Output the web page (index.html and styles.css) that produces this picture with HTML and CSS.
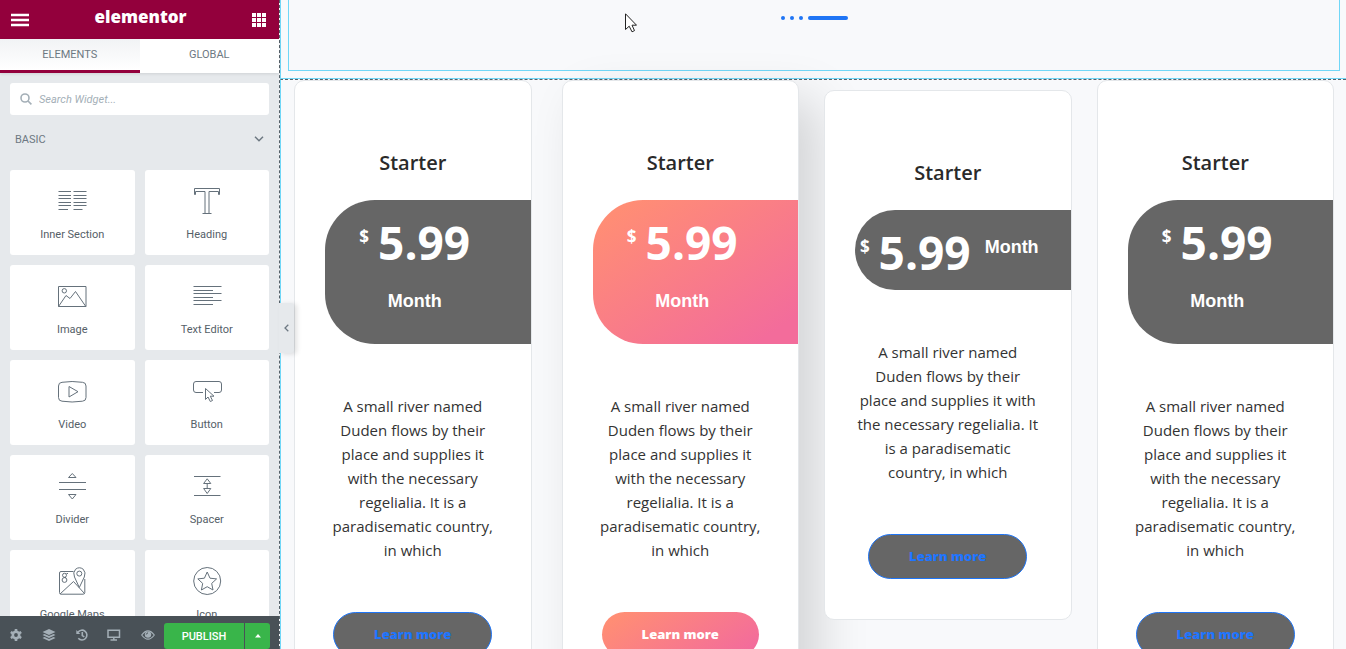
FILE: index.html
```html
<!DOCTYPE html>
<html lang="en">
<head>
<meta charset="utf-8">
<title>Elementor</title>
<link rel="stylesheet" href="styles.css">
</head>
<body>
<div class="editor">
  <aside class="panel">
    <header class="panel-header">
      <button class="header-button" aria-label="Menu"><svg width="18" height="14" viewBox="0 0 18 14"><path d="M0 2h18M0 7h18M0 12h18" stroke="#fff" stroke-width="2.5"/></svg></button>
      <span class="logo">elementor</span>
      <button class="header-button" aria-label="Widgets"><svg width="14" height="14" viewBox="0 0 14 14" fill="#fff"><path d="M0 0h4v4H0zM5 0h4v4H5zM10 0h4v4h-4zM0 5h4v4H0zM5 5h4v4H5zM10 5h4v4h-4zM0 10h4v4H0zM5 10h4v4H5zM10 10h4v4h-4z"/></svg></button>
    </header>
    <nav class="tabs">
      <button class="tab tab-active">ELEMENTS</button>
      <button class="tab">GLOBAL</button>
    </nav>
    <div class="panel-body">
      <label class="search">
        <svg width="12" height="12" viewBox="0 0 12 12" fill="none" stroke="#a4afb7" stroke-width="1.6"><circle cx="5" cy="5" r="4"/><path d="M8 8l3.4 3.4"/></svg>
        <input type="text" placeholder="Search Widget..." aria-label="Search Widget">
      </label>
      <button class="category">BASIC <svg width="10" height="6" viewBox="0 0 10 6" fill="none" stroke="#6d7882" stroke-width="1.5"><path d="M1 .8l4 4 4-4"/></svg></button>
      <div class="widgets">
        <button class="widget"><svg class="icon" viewBox="0 0 30 30"><path d="M1.5 5.5H14M1.5 9.5H14M1.5 12.5H14M1.5 16.5H14M1.5 19.5H14M1.5 23.5H11M16.500 5.500H29.500M16.500 9.500H29.500M16.500 12.500H29.500M16.500 16.500H29.500M16.500 19.500H29.500M16.500 23.500H25.500"/></svg>Inner Section</button>
        <button class="widget"><svg class="icon" viewBox="0 0 30 30"><path d="M2.500 8.500V2.500H27.500V8.500H26.500V5.500H17V27.500M3.500 5.500H13V27.500M3.500 5.500V8.500H2.500M10.500 27.500H19.500"/></svg>Heading</button>
        <button class="widget"><svg class="icon" viewBox="0 0 30 30"><path d="M1.500 5.500H29V25.500H1.500ZM1.500 25.500L9 14.500L13 17.500L18.500 10.500L28.800 25.500"/><circle cx="7.300" cy="9.800" r="2.200"/></svg>Image</button>
        <button class="widget"><svg class="icon" viewBox="0 0 30 30"><path d="M1.500 5.500H29.500M1.500 9.500H21M1.500 12.500H29.500M1.500 16.500H21M1.500 19.500H29.500M1.500 23.500H21"/></svg>Text Editor</button>
        <button class="widget"><svg class="icon" viewBox="0 0 30 30"><path d="M5 6.300Q15 4.700 25.500 6.300Q29 6.500 29 10V21.500Q29 25 25.500 25.200Q15 26.800 5 25.200Q1.500 25 1.500 21.500V10Q1.500 6.500 5 6.300ZM12 10.500V21L21 15.700Z"/></svg>Video</button>
        <button class="widget"><svg class="icon" viewBox="0 0 30 30"><path d="M11 16.500H4Q1.500 16.500 1.500 14V8Q1.500 5.500 4 5.500H27Q29.500 5.500 29.500 8V14Q29.500 16.500 27 16.500H22M13.500 12.500V23.500L16 21L18.300 25.500L20.500 24.500L18.300 20.200H22Z"/></svg>Button</button>
        <button class="widget"><svg class="icon" viewBox="0 0 30 30"><path d="M2 11.500H29M2 18.500H29M15.300 2.500L19 6.500H11.500ZM15.300 28L19 23.500H11.500Z"/></svg>Divider</button>
        <button class="widget"><svg class="icon" viewBox="0 0 30 30"><path d="M2 5.500H28.500M2 24.500H28.500M15.200 7.800L18.800 12.500H11.600ZM15.200 22.500L18.800 17.500H11.600ZM15.200 12.500V17.500"/></svg>Spacer</button>
        <button class="widget"><svg class="icon" viewBox="0 0 30 30"><path d="M16.500 5.500H4Q2.500 5.500 2.500 7V26.500Q2.500 28.200 4 28.200H26Q27.800 28.200 27.800 26.500V13M3 28L16.500 15.500L27.500 27.500M22.300 21.500L17.500 11Q15.500 6.500 18.500 3.300Q22.300 .2 26.300 3.300Q29.200 6.500 27.300 11Z"/><circle cx="22.300" cy="7.600" r="2.500"/><circle cx="7.500" cy="9.300" r="2"/><circle cx="7.500" cy="14" r="2.400"/><path d="M9.500 7.500h1.500M7 11.500h2"/></svg>Google Maps</button>
        <button class="widget"><svg class="icon" viewBox="0 0 30 30"><circle cx="15.200" cy="15" r="13.500"/><path d="M15.200 6L18 12.200L24.600 12.900L19.700 17.400L21 24L15.200 20.700L9.400 24L10.700 17.400L5.800 12.900L12.400 12.200Z"/></svg>Icon</button>
      </div>
    </div>
    <footer class="panel-footer">
      <div class="tools">
        <button class="tool" aria-label="Settings"><svg width="12" height="12" viewBox="0 0 12 12"><circle cx="6" cy="6" r="3.200" fill="none" stroke="#a4afb7" stroke-width="2.600"/><path d="M6 0v2.500M6 9.500V12M.8 3l2.200 1.300M9 7.700L11.200 9M.8 9L3 7.700M9 4.300L11.200 3" stroke="#a4afb7" stroke-width="2.600"/></svg></button>
        <button class="tool" aria-label="Navigator"><svg width="14" height="12" viewBox="0 0 14 12" fill="#a4afb7"><path d="M7 0L13.500 3L7 6L.5 3ZM.5 5.900L2.500 5L7 7L11.500 5L13.500 5.900L7 9ZM.5 8.900L2.500 8L7 10L11.500 8L13.500 8.900L7 12Z"/></svg></button>
        <button class="tool" aria-label="History"><svg width="12" height="12" viewBox="0 0 12 12" fill="none" stroke="#a4afb7" stroke-width="1.600"><path d="M2 3.200A4.900 4.900 0 1 1 2.300 9.300M6.300 3V6.500L8.300 7.800"/><path d="M.3 1v4h4z" fill="#a4afb7" stroke="none"/></svg></button>
        <button class="tool" aria-label="Responsive mode"><svg width="14" height="12" viewBox="0 0 14 12" fill="none" stroke="#a4afb7" stroke-width="1.500"><path d="M1 1.200H12.500V8.300H1ZM1 8.300H12.500M3.500 11H10M6.800 8V11"/></svg></button>
        <button class="tool" aria-label="Preview"><svg width="14" height="10" viewBox="0 0 14 10"><path d="M.7 5Q7-3.400 13.300 5Q7 13.400 .7 5Z" fill="none" stroke="#a4afb7" stroke-width="1.200"/><circle cx="7" cy="4.600" r="3.200" fill="#a4afb7"/><path d="M5.300 4.500Q5.500 3 7 2.900" fill="none" stroke="#495157"/></svg></button>
      </div>
      <button class="publish">PUBLISH</button>
      <button class="publish-more" aria-label="Save options"><svg width="6" height="4" viewBox="0 0 6 4"><path d="M0 3.500L3 0L6 3.500Z" fill="#fff"/></svg></button>
    </footer>
    <button class="panel-toggle" aria-label="Hide panel"><svg width="5" height="8" viewBox="0 0 5 8" fill="none" stroke="#6d7882" stroke-width="1.300"><path d="M4.300 .8L1 4L4.300 7.200"/></svg></button>
  </aside>

  <main class="canvas">
    <section class="slider-section">
      <div class="slider-column">
        <span class="dot"></span><span class="dot"></span><span class="dot"></span><span class="bar"></span>
      </div>
    </section>
    <section class="pricing">
      <article class="card">
        <h2 class="card-title">Starter</h2>
        <div class="price"><span class="currency">$</span><span class="amount">5.99</span><span class="period">Month</span></div>
        <p class="description">A small river named Duden flows by their place and supplies it with the necessary regelialia. It is a paradisematic country, in which</p>
        <a class="learn" href="#">Learn more</a>
      </article>
      <article class="card card-featured">
        <h2 class="card-title">Starter</h2>
        <div class="price"><span class="currency">$</span><span class="amount">5.99</span><span class="period">Month</span></div>
        <p class="description">A small river named Duden flows by their place and supplies it with the necessary regelialia. It is a paradisematic country, in which</p>
        <a class="learn" href="#">Learn more</a>
      </article>
      <article class="card card-wide">
        <h2 class="card-title">Starter</h2>
        <div class="price"><span class="currency">$</span><span class="amount">5.99</span><span class="period">Month</span></div>
        <p class="description">A small river named Duden flows by their place and supplies it with the necessary regelialia. It is a paradisematic country, in which</p>
        <a class="learn" href="#">Learn more</a>
      </article>
      <article class="card">
        <h2 class="card-title">Starter</h2>
        <div class="price"><span class="currency">$</span><span class="amount">5.99</span><span class="period">Month</span></div>
        <p class="description">A small river named Duden flows by their place and supplies it with the necessary regelialia. It is a paradisematic country, in which</p>
        <a class="learn" href="#">Learn more</a>
      </article>
    </section>
    <svg class="cursor" width="12" height="20" viewBox="0 0 12 20"><path d="M.5 .8V16.500L4.200 13.200L7 18.800L9.500 17.600L7 12.200H11.500Z" fill="#fff" stroke="#222" stroke-width="1"/></svg>
  </main>
</div>
</body>
</html>
```
FILE: styles.css
```css
* { box-sizing: border-box; }

body {
  margin: 0;
  background: #f8f9fb;
  font-family: "Open Sans", "Noto Sans", sans-serif;
}

button {
  margin: 0;
  padding: 0;
  border: 0;
  background: none;
  font-family: Roboto, sans-serif;
}

svg { display: block; }

.editor {
  display: flex;
  height: 100vh;
  overflow: hidden;
}

/* Left panel */
.panel {
  position: relative;
  z-index: 2;
  display: flex;
  flex: 0 0 279px;
  flex-direction: column;
  background: #e6e9ec;
  font-family: Roboto, sans-serif;
}

.panel-header {
  display: flex;
  flex: 0 0 39px;
  align-items: center;
  justify-content: space-between;
  padding: 0 13px 0 11px;
  background: #93003c;
}

.logo {
  padding-bottom: 6px;
  color: #fff;
  font: 800 17px/24px "Open Sans", sans-serif;
}

.tabs {
  display: flex;
  flex: 0 0 34px;
  background: #fff;
  box-shadow: 0 1px 3px rgba(0, 0, 0, .1);
}

.tab {
  flex: 1;
  padding-bottom: 1px;
  border-bottom: 3px solid transparent;
  color: #6d7882;
  font-size: 11px;
}

.tab-active {
  border-bottom-color: #93003c;
  background: linear-gradient(#f1f3f5, #fff);
}

.panel-body {
  flex: 1;
  min-height: 0;
  overflow: hidden;
  padding: 10px;
}

.search {
  display: flex;
  align-items: center;
  gap: 7px;
  height: 32px;
  padding: 0 10px;
  border-radius: 3px;
  background: #fff;
}

.search input {
  flex: 1;
  min-width: 0;
  padding: 0;
  border: 0;
  outline: 0;
  font: italic 11px Roboto, sans-serif;
}

.search input::placeholder { color: #a4afb7; }

.category {
  display: flex;
  align-items: center;
  justify-content: space-between;
  width: 100%;
  height: 48px;
  margin-bottom: 7px;
  padding: 0 5px;
  color: #6d7882;
  font-size: 11px;
}

.widgets {
  display: grid;
  grid-template-columns: 1fr 1fr;
  gap: 10px;
}

.widget {
  display: flex;
  flex-direction: column;
  align-items: center;
  gap: 11px;
  height: 85px;
  padding-top: 16px;
  border-radius: 3px;
  background: #fff;
  color: #556068;
  font-size: 11px;
  line-height: 16px;
}

.icon {
  width: 30px;
  height: 30px;
  fill: none;
  stroke: #65717b;
}

.panel-footer {
  display: flex;
  flex: 0 0 33px;
  padding: 7px 9px 0 8px;
  background: #495157;
}

.tools {
  display: flex;
  flex: 1;
  align-items: center;
  justify-content: space-between;
  padding: 0 9px 2px 2px;
}

.publish,
.publish-more {
  height: 26px;
  background: #39b54a;
  color: #fff;
  font-size: 11px;
  font-weight: 500;
}

.publish {
  width: 80px;
  margin-right: 1px;
  border-radius: 3px 0 0 3px;
}

.publish-more {
  display: grid;
  place-items: center;
  width: 25px;
  border-radius: 0 3px 3px 0;
}

.panel-toggle {
  position: absolute;
  top: 303px;
  left: 100%;
  display: grid;
  place-items: center;
  width: 15px;
  height: 50px;
  border-radius: 0 3px 3px 0;
  background: #e6e9ec;
  box-shadow: 3px 1px 5px rgba(0, 0, 0, .12);
}

/* Page preview */
.canvas {
  position: relative;
  flex: 1;
  min-width: 0;
  overflow: hidden;
  border-left: 1px dashed #556068;
}

.slider-section {
  padding: 0 6px 7px 7px;
  border-bottom: 1px solid #71d7f7;
  border-left: 1px solid #71d7f7;
}

.slider-column {
  display: flex;
  justify-content: center;
  gap: 5px;
  height: 71px;
  padding-top: 16px;
  border: 1px solid #71d7f7;
  border-top: 0;
}

.dot,
.bar {
  width: 4px;
  height: 4px;
  border-radius: 2px;
  background: #1f75f5;
}

.bar { width: 40px; }

.pricing {
  display: grid;
  grid-template-columns: repeat(4, 1fr);
  align-items: start;
  gap: 30px;
  padding: 0 12px 20px 13px;
  border-top: 1px dashed #556068;
  border-left: 1px solid #71d7f7;
}

.card {
  display: flex;
  flex-direction: column;
  padding: 69px 0 40px 30px;
  border: 1px solid #e4e7ea;
  border-radius: 10px;
  background: #fff;
  color: #333;
  text-align: center;
}

.card-featured { box-shadow: 20px 20px 50px rgba(0, 0, 0, .15); }

.card-wide {
  position: relative;
  margin: 10px -5px 0;
}

.card-title {
  margin: 0 30px 24px 0;
  color: #2a2a2a;
  font-size: 20px;
  font-weight: 600;
  line-height: 26px;
}

.price {
  display: flex;
  flex-wrap: wrap;
  justify-content: center;
  column-gap: 9px;
  padding: 10px 26px 6px 0;
  border-radius: 50px 0 0 50px;
  background: #666;
  color: #fff;
  font-weight: 700;
}

.card-wide .price { padding-right: 22px; }

.currency,
.period {
  height: 64px;
  font-size: 17px;
  line-height: 54px;
}

.period {
  padding: 0 5px;
  font-family: "Liberation Sans", Arial, sans-serif;
  font-size: 18px;
}

.amount {
  font-size: 46px;
  line-height: 64px;
}

.description {
  margin: 50px 30px 50px 0;
  font-size: 15px;
  line-height: 24px;
}

.learn {
  align-self: center;
  margin-right: 30px;
  padding: 0 40px;
  border: 1px solid #1f75f5;
  border-radius: 23px;
  background: #666;
  color: #1f75ff;
  font-size: 13px;
  font-weight: 800;
  line-height: 43px;
  text-decoration: none;
}

.card-featured .price,
.card-featured .learn {
  background: linear-gradient(145deg, #ff8d75 10%, #f36c9b 90%);
}

.card-featured .learn {
  padding: 1px 40px;
  border: 0;
  color: #fff;
}

.cursor {
  position: absolute;
  top: 13px;
  left: 345px;
}
```
